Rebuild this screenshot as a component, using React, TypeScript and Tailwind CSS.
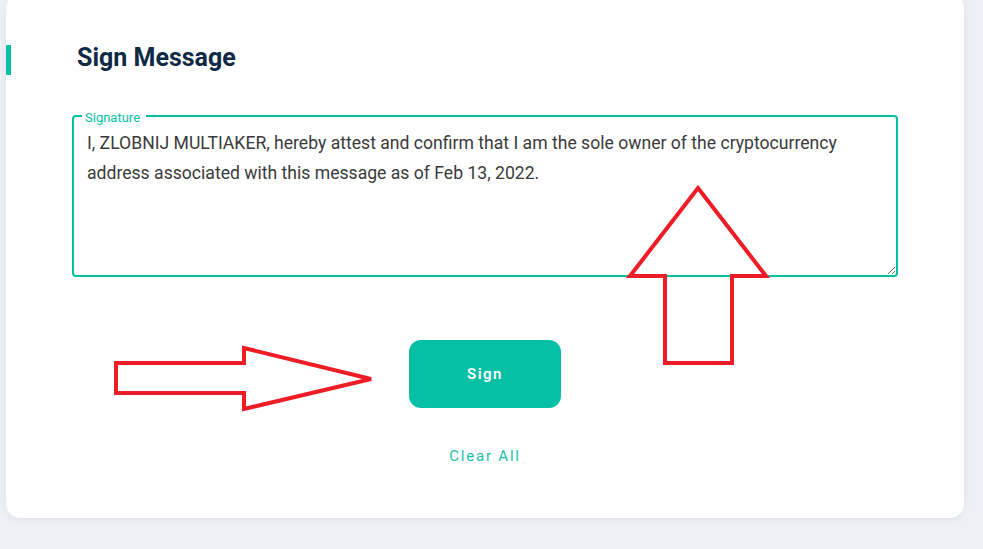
import React from 'react';

const MESSAGE =
  'I, ZLOBNIJ MULTIAKER, hereby attest and confirm that I am the sole owner of the cryptocurrency address associated with this message as of Feb 13, 2022.';

export default function App() {
  return (
    <div
      className="relative min-h-[549px] w-[983px] overflow-hidden bg-[#eff0f6] pl-[6px]"
      style={{ fontFamily: 'Roboto, "Noto Sans", sans-serif' }}
    >
      {/* Card */}
      <div className="-mt-[6px] w-[958px] rounded-[14px] bg-white pt-[49px] pb-[52px] shadow-[0_2px_6px_rgba(180,186,210,0.25)]">
        {/* Header */}
        <div className="flex items-start">
          <div className="mt-[2px] h-[30px] w-[5px] bg-[#05c0a5]" />
          <h1 className="ml-[66px] text-[25px] leading-[30px] font-bold text-[#0e2a45]">Sign Message</h1>
        </div>

        <div className="px-[66px]">
          {/* Signature field */}
          <div className="relative mt-[40px]">
            <textarea
              readOnly
              defaultValue={MESSAGE}
              className="block h-[162px] w-full rounded-[4px] border-2 border-[#05c0a5] bg-white px-[13px] pt-[12px] text-[17.6px] leading-[29.7px] text-[#3a3a3a] outline-none"
            />
            <label className="absolute -top-[5px] left-[10px] bg-white pl-[3px] pr-[6px] text-[13px] leading-[15px] text-[#05c0a5]">
              Signature
            </label>
          </div>

          {/* Actions */}
          <div className="flex flex-col items-center">
            <button
              type="button"
              className="mt-[63px] h-[68px] w-[152px] rounded-[12px] bg-[#05c0a5] text-[15px] font-semibold tracking-[1.5px] text-white"
            >
              Sign
            </button>
            <button
              type="button"
              className="mt-[38px] text-[15px] leading-[20px] font-normal tracking-[1.8px] text-[#1cc2a7]"
            >
              Clear All
            </button>
          </div>
        </div>
      </div>

      {/* Annotations */}
      <svg
        className="pointer-events-none absolute top-0 left-0"
        width="983"
        height="549"
        viewBox="0 0 983 549"
        fill="none"
        stroke="#ee1c25"
        strokeWidth="4"
        strokeLinejoin="miter"
      >
        <polygon points="116,363 244,363 244,348 371,379 244,409 244,393 116,393" />
        <polygon points="698,188 766,276 732,276 732,363 665,363 665,276 630,276" />
      </svg>
    </div>
  );
}
